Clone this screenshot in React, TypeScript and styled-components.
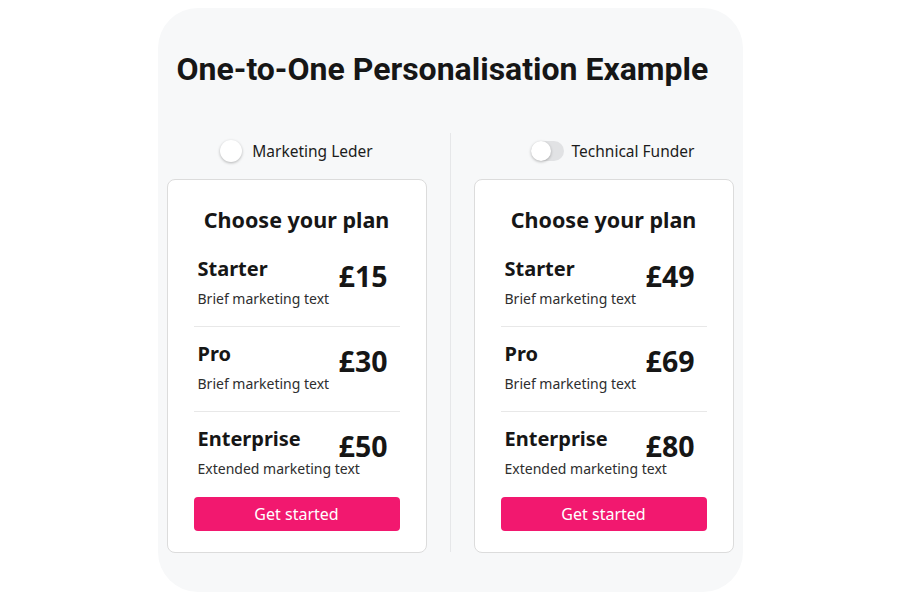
import React from 'react'
import styled, { createGlobalStyle } from 'styled-components'

const Global = createGlobalStyle`
  body {
    margin: 0;
    background: #fff;
    font-family: "Noto Sans", "Open Sans", sans-serif;
    color: #161616;
  }
`

const Panel = styled.div`
  width: 585px;
  height: 584px;
  box-sizing: border-box;
  margin: 8px auto 0;
  background: #f7f8f9;
  border-radius: 40px;
  padding: 41px 7px 0 9px;
`

const Title = styled.h1`
  margin: 0 0 44px 10px;
  font-family: Roboto, "Noto Sans", sans-serif;
  font-size: 32px;
  line-height: 40px;
  font-weight: 700;
  white-space: nowrap;
`

const Columns = styled.div`
  display: grid;
  grid-template-columns: 260px 1px 260px;
  column-gap: 23px;
`

const Divider = styled.div`
  background: #e6e7e9;
  margin-bottom: 1px;
`

const Column = styled.div`
  display: flex;
  flex-direction: column;
`

const Persona = styled.div<{ $shift: number; $gap: number }>`
  height: 36px;
  display: flex;
  align-items: center;
  justify-content: center;
  gap: ${(p) => p.$gap}px;
  margin-bottom: 10px;
  padding-left: ${(p) => p.$shift}px;
  font-size: 15.5px;
  color: #1c1c1c;
`

const Knob = styled.span`
  width: 22px;
  height: 22px;
  border-radius: 50%;
  background: #fff;
  box-shadow: 0 1px 3px rgba(0, 0, 0, 0.28);
  display: block;
`

const Track = styled.span`
  width: 33px;
  height: 20px;
  border-radius: 10px;
  background: #e1e2e4;
  display: flex;
  align-items: center;
  ${Knob} {
    width: 20px;
    height: 20px;
  }
`

const Card = styled.div`
  background: #fff;
  border: 1px solid #dcdcdc;
  border-radius: 8px;
  padding: 26px 26px 21px;
`

const CardTitle = styled.h2`
  margin: 0 0 8px;
  text-align: center;
  font-size: 21.5px;
  line-height: 28px;
  font-weight: 700;
`

const Plan = styled.div<{ $last?: boolean }>`
  display: grid;
  grid-template-columns: 1fr auto;
  row-gap: 8px;
  padding: 15px 12px ${(p) => (p.$last ? 18 : 17)}px 4px;
  border-bottom: ${(p) => (p.$last ? 'none' : '1px solid #e8e8e8')};
`

const PlanName = styled.div`
  font-size: 20px;
  line-height: 24px;
  font-weight: 700;
`

const Price = styled.div`
  margin: 6px 0 -8px;
  font-size: 28.5px;
  line-height: 26px;
  font-weight: 700;
`

const Blurb = styled.div`
  grid-column: 1 / -1;
  font-size: 14px;
  line-height: 20px;
  color: #2e2e2e;
`

const Button = styled.button`
  display: block;
  width: 100%;
  height: 34px;
  border: none;
  border-radius: 4px;
  background: #f2186f;
  color: #fff;
  font-family: inherit;
  font-size: 16px;
  cursor: pointer;
`

type Tier = { name: string; price: number; blurb: string }

const PlanCard = ({ tiers }: { tiers: Tier[] }) => (
  <Card>
    <CardTitle>Choose your plan</CardTitle>
    {tiers.map((t, i) => (
      <Plan key={t.name} $last={i === tiers.length - 1}>
        <PlanName>{t.name}</PlanName>
        <Price>£{t.price}</Price>
        <Blurb>{t.blurb}</Blurb>
      </Plan>
    ))}
    <Button>Get started</Button>
  </Card>
)

const tiersFor = (prices: number[]): Tier[] => [
  { name: 'Starter', price: prices[0], blurb: 'Brief marketing text' },
  { name: 'Pro', price: prices[1], blurb: 'Brief marketing text' },
  { name: 'Enterprise', price: prices[2], blurb: 'Extended marketing text' },
]

export default function App() {
  return (
    <>
      <Global />
      <Panel>
        <Title>One-to-One Personalisation Example</Title>
        <Columns>
          <Column>
            <Persona $shift={0} $gap={10}>
              <Knob />
              Marketing Leder
            </Persona>
            <PlanCard tiers={tiersFor([15, 30, 50])} />
          </Column>
          <Divider />
          <Column>
            <Persona $shift={18} $gap={8}>
              <Track>
                <Knob />
              </Track>
              Technical Funder
            </Persona>
            <PlanCard tiers={tiersFor([49, 69, 80])} />
          </Column>
        </Columns>
      </Panel>
    </>
  )
}
